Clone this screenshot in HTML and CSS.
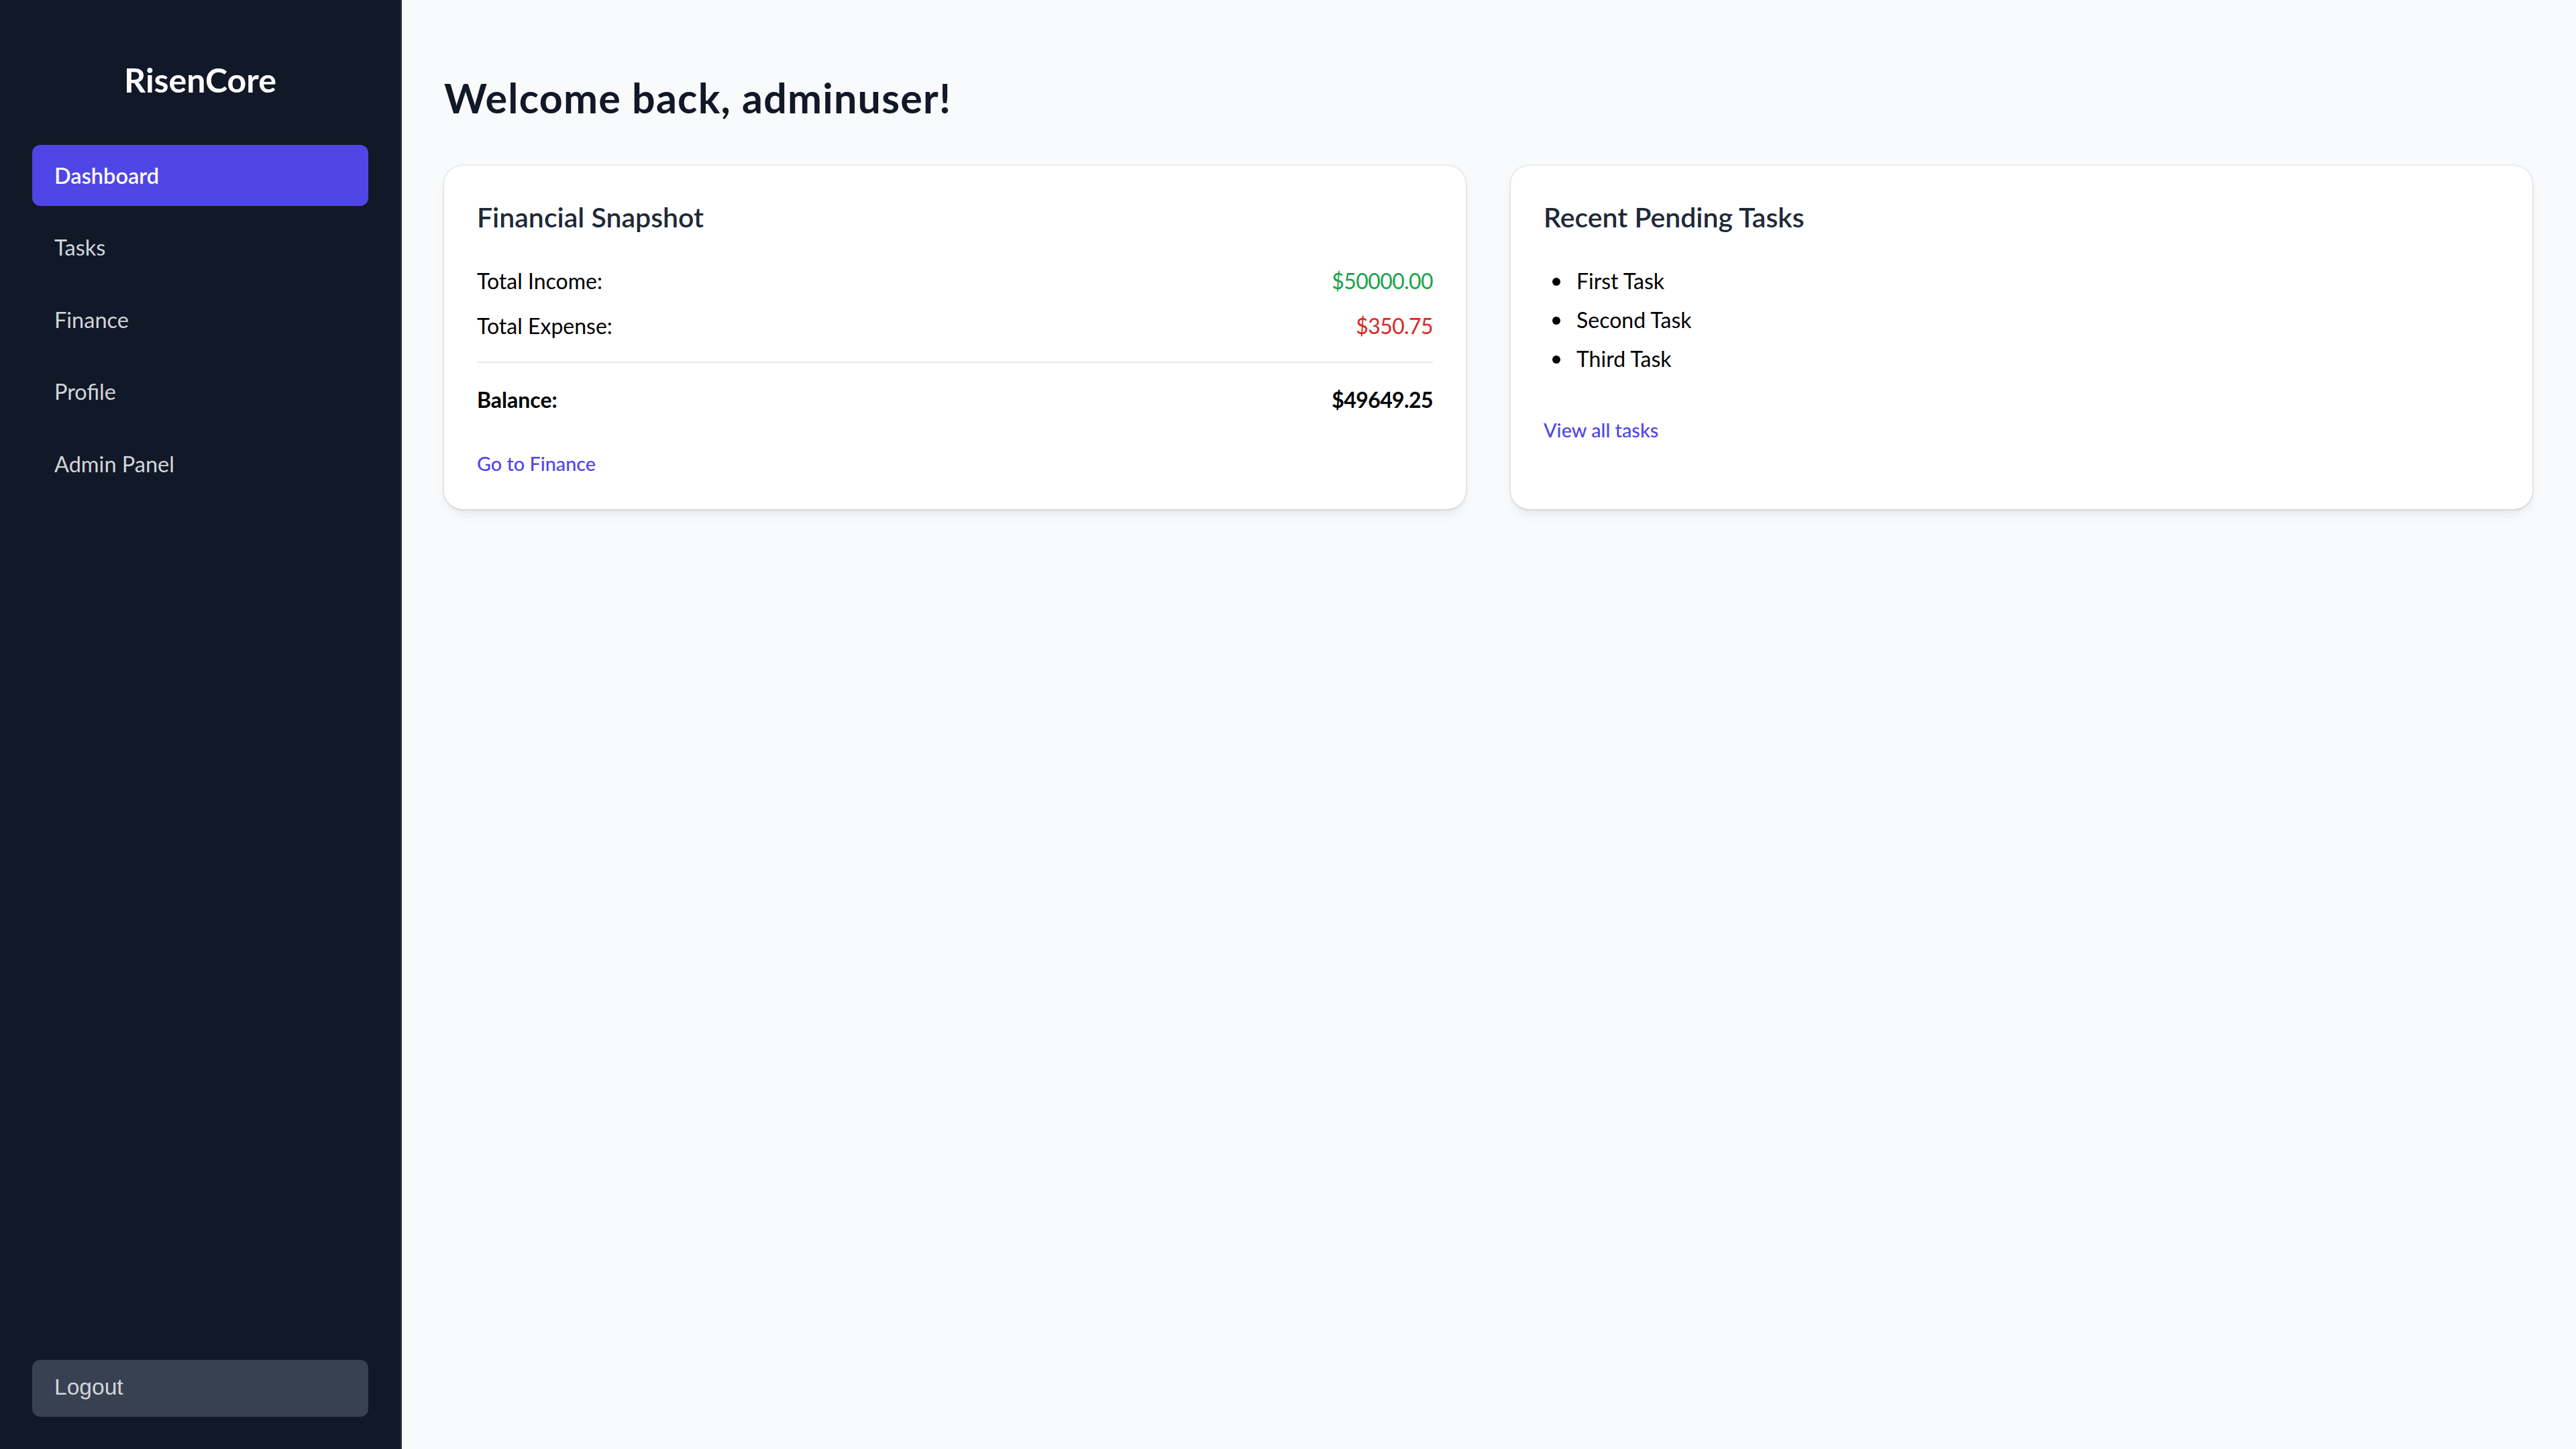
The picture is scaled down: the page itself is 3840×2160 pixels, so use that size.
FILE: index.html
```html
<!DOCTYPE html>
<html lang="en">
<head>
<meta charset="utf-8">
<title>RisenCore – Dashboard</title>
<link rel="stylesheet" href="styles.css">
</head>
<body>
<div class="app">
  <aside class="sidebar">
    <div class="brand">RisenCore</div>
    <nav class="nav">
      <a class="nav-item active" href="#">Dashboard</a>
      <a class="nav-item" href="#">Tasks</a>
      <a class="nav-item" href="#">Finance</a>
      <a class="nav-item" href="#">Profile</a>
      <a class="nav-item" href="#">Admin Panel</a>
    </nav>
    <button class="logout" type="button">Logout</button>
  </aside>
  <main class="main">
    <h1 class="welcome">Welcome back, adminuser!</h1>
    <div class="cards">
      <section class="card">
        <h2 class="card-title">Financial Snapshot</h2>
        <div class="rows">
          <div class="row"><span>Total Income:</span><span class="amount income">$50000.00</span></div>
          <div class="row"><span>Total Expense:</span><span class="amount expense">$350.75</span></div>
        </div>
        <div class="row balance"><span>Balance:</span><span class="amount">$49649.25</span></div>
        <a class="card-link link-finance" href="#">Go to Finance</a>
      </section>
      <section class="card">
        <h2 class="card-title">Recent Pending Tasks</h2>
        <ul class="tasks">
          <li>First Task</li>
          <li>Second Task</li>
          <li>Third Task</li>
        </ul>
        <a class="card-link link-tasks" href="#">View all tasks</a>
      </section>
    </div>
  </main>
</div>
</body>
</html>
```
FILE: styles.css
```css
* { box-sizing: border-box; }
html, body { margin: 0; padding: 0; }
body {
  font-family: Lato, "Noto Sans", sans-serif;
  background: #f9fafb;
  color: #000;
}
.app {
  display: flex;
  height: 2160px;
}
.sidebar {
  width: 599px;
  flex: none;
  background: #111827;
  border-right: 2px solid #2a3140;
  display: flex;
  flex-direction: column;
  padding: 86px 48px 48px 48px;
}
.brand {
  color: #fff;
  font-size: 50px;
  font-weight: 700;
  line-height: 67px;
  text-align: center;
  margin-bottom: 63px;
}
.nav {
  display: flex;
  flex-direction: column;
  gap: 16.5px;
}
.nav-item {
  display: block;
  color: #d1d5db;
  text-decoration: none;
  font-size: 32.5px;
  line-height: 48px;
  padding: 21.5px 33px;
  border-radius: 12px;
}
.nav-item.active {
  background: #4f46e5;
  color: #fff;
  font-weight: 600;
}
.logout {
  margin-top: auto;
  width: 100%;
  border: none;
  background: #374151;
  color: #d1d5db;
  font-family: "Liberation Sans", Arial, sans-serif;
  font-size: 33.6px;
  line-height: 48px;
  text-align: left;
  padding: 17px 33px 20px 33px;
  border-radius: 12px;
}
.main {
  flex: 1;
  padding: 110px 65px 0 63px;
}
.welcome {
  margin: 0 0 65px 0;
  font-size: 61px;
  letter-spacing: 1.2px;
  line-height: 72px;
  font-weight: 700;
  color: #111827;
}
.cards {
  display: grid;
  grid-template-columns: 1fr 1fr;
  gap: 67px;
  align-items: stretch;
}
.card {
  background: #fff;
  border-radius: 28px;
  padding: 43px 49px 49px 49px;
  box-shadow: 0 0 0 2px rgba(17, 24, 39, 0.06), 0 10px 18px -4px rgba(0, 0, 0, 0.08), 0 4px 8px -4px rgba(0, 0, 0, 0.08);
  display: flex;
  flex-direction: column;
  align-items: flex-start;
}
.card-title {
  margin: 0 0 38px 0;
  font-size: 41px;
  line-height: 67px;
  font-weight: 600;
  color: #1f2937;
}
.rows {
  width: 100%;
  display: flex;
  flex-direction: column;
  gap: 19px;
  padding-bottom: 29px;
  border-bottom: 2px solid #e5e7eb;
}
.row {
  width: 100%;
  display: flex;
  justify-content: space-between;
  font-size: 32px;
  line-height: 48px;
}
.amount { letter-spacing: -0.6px; }
.income { color: #16a34a; }
.expense { color: #dc2626; }
.balance {
  padding-top: 31px;
  font-weight: 700;
}
.card-link {
  color: #4f46e5;
  text-decoration: none;
  font-size: 28.8px;
  line-height: 38px;
  font-weight: 500;
}
.link-finance { margin-top: 52px; }
.link-tasks { margin-top: 63px; }
.tasks {
  list-style: none;
  margin: 0;
  padding: 0;
  display: flex;
  flex-direction: column;
  gap: 10px;
}
.tasks li {
  display: flex;
  align-items: center;
  font-size: 32px;
  line-height: 48px;
}
.tasks li::before {
  content: "";
  width: 12px;
  height: 12px;
  border-radius: 50%;
  background: #000;
  margin: 2px 24px 0 13px;
}
```
